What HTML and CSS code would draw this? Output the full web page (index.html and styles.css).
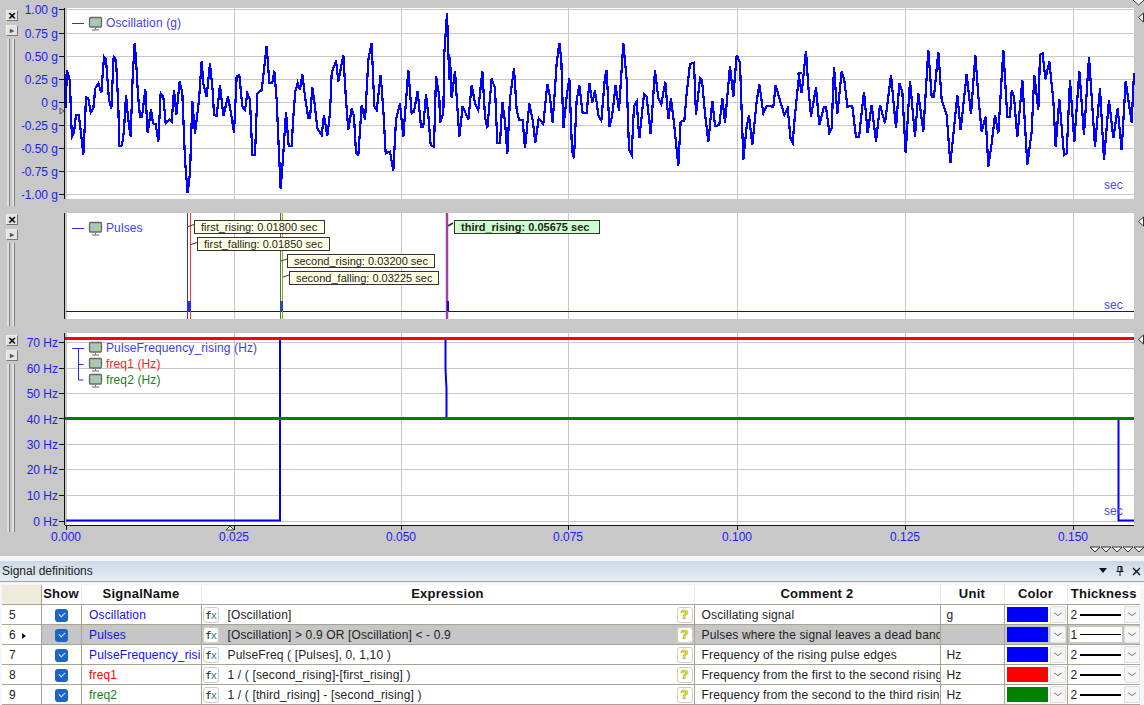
FILE: index.html
```html
<!DOCTYPE html>
<html lang="en">

<head>
    <meta charset="UTF-8">
    <title>Signal definitions</title>
    <link rel="stylesheet" href="styles.css">
</head>

<body>
    <svg width="0" height="0" class="defs">
        <defs>
            <g id="monitor">
                <rect x="1.5" y="0.5" width="12" height="9.5" rx="1" fill="#a8c8b4" stroke="#666" stroke-width="1.3" />
                <path d="M7.5 11v1.5M4 13h7" stroke="#666" fill="none" />
            </g>
        </defs>
    </svg>

    <div class="charts">
        <!-- Oscillation -->
        <div class="chart chart-top">
            <div class="tools">
                <button class="tool tool-close">×</button>
                <button class="tool tool-arrow">▸</button>
                <div class="slider"></div>
            </div>
            <svg class="plot" viewBox="22 0 1122 206" width="1122" height="206">
                <rect x="66" y="8" width="1068" height="191" fill="#fff" />
                <path class="grid" d="M66 9.5h1068M66 33.5h1068M66 56.5h1068M66 79.5h1068M66 102.5h1068M66 125.5h1068M66 148.5h1068M66 171.5h1068M66 194.5h1068M66.5 8v191M234.5 8v191M401.5 8v191M568.5 8v191M737.5 8v191M905.5 8v191M1073.5 8v191" />
                <path class="axis" d="M64.5 8v191M59 9.5h5M59 33.5h5M59 56.5h5M59 79.5h5M59 102.5h5M59 125.5h5M59 148.5h5M59 171.5h5M59 194.5h5" />
                <path d="M60 108l4 3-4 3z" fill="none" stroke="#555" />
                <g class="ticks">
                    <text x="58" y="14">1.00 g</text>
                    <text x="58" y="38">0.75 g</text>
                    <text x="58" y="61">0.50 g</text>
                    <text x="58" y="84">0.25 g</text>
                    <text x="58" y="107">0 g</text>
                    <text x="58" y="130">-0.25 g</text>
                    <text x="58" y="153">-0.50 g</text>
                    <text x="58" y="176">-0.75 g</text>
                    <text x="58" y="199">-1.00 g</text>
                </g>
                <g class="trace">
                    <polyline transform="translate(60 0) scale(.33333)" points="18,325 20,212 27,230 30,245 33,350 36,410 42,398 48,345 56,345 62,390 70,465 75,365 78,292 85,295 92,338 100,325 106,265 115,250 124,278 132,170 138,178 147,300 154,326 161,170 168,180 175,320 178,438 186,436 192,390 198,285 203,340 208,385 212,410 218,232 224,128 228,178 234,285 240,350 246,350 256,268 263,400 273,328 279,370 287,372 295,425 302,280 310,290 317,370 328,358 335,365 342,270 349,345 359,245 367,280 375,480 383,580 390,520 397,302 405,402 417,300 425,183 430,250 440,290 450,190 458,270 462,345 470,348 480,255 490,348 504,290 513,340 522,398 530,230 538,225 547,320 555,330 562,280 570,300 577,465 585,465 592,280 605,270 612,210 620,138 628,248 637,248 643,212 650,300 657,460 662,568 670,460 678,335 686,438 695,438 700,350 706,275 713,248 720,270 727,222 735,290 745,355 750,355 757,262 765,320 772,385 785,405 792,345 802,408 810,340 815,220 828,182 835,245 850,165 858,300 865,390 875,325 882,350 888,460 895,465 905,315 915,360 925,180 935,128 943,320 950,330 962,225 970,330 977,460 990,455 1000,512 1008,360 1020,310 1030,410 1045,210 1055,340 1062,335 1073,272 1083,380 1090,380 1098,282 1105,345 1112,435 1122,440 1128,228 1138,290 1140,368 1150,340 1153,160 1161,40 1168,240 1170,172" />
                    <polyline transform="translate(450 0) scale(.33333)" points="0,172 5,295 15,212 22,320 28,410 38,318 55,360 65,255 75,310 85,330 97,212 105,350 112,385 125,236 135,265 142,430 150,430 157,305 165,365 172,462 180,295 192,205 200,330 207,360 218,360 225,445 238,310 248,360 256,428 266,355 280,372 292,252 300,290 308,368 320,190 328,128 334,180 340,385 350,290 358,233 366,450 372,475 380,300 388,255 398,340 410,340 418,248 427,308 435,272 445,345 454,362 465,230 470,210 478,380 486,350 497,255 507,332 520,130 530,240 537,450 545,465 552,318 560,305 568,415 582,282 590,290 602,402 615,210 625,295 634,312 646,245 655,358 663,295 672,370 685,498 692,365 703,362 710,280 720,192 732,188 738,345 750,235 756,240 765,340 775,425 787,302 795,378 808,375 817,295 825,368 840,198 850,290 860,165 870,188 880,480 890,380 897,345 907,435 920,305 928,252 940,340 950,318 970,320 977,255 990,302 1003,345 1013,325 1022,418 1028,428 1035,345 1048,218 1055,218" />
                    <polyline transform="translate(790 0) scale(.33333)" points="25,218 35,280 48,152 55,260 63,350 78,262 88,375 102,320 108,320 118,398 125,385 132,200 142,342 155,215 163,240 172,320 187,318 198,412 207,412 222,275 233,400 245,315 258,425 270,315 285,370 303,225 318,385 328,250 337,275 347,460 360,242 375,410 385,280 400,395 415,150 425,290 432,290 445,155 455,300 470,345 481,490 490,405 502,285 512,390 530,222 543,342 556,165 566,300 575,395 587,350 595,500 605,430 615,345 625,400 640,150 652,352 660,352 665,272 672,290 682,412 697,240 712,495 725,395 733,225 745,330 750,165 758,160 766,238 778,185 790,300 797,440 808,297 822,465 830,460 840,240 853,425 868,212 882,405 897,170 915,440 930,265 942,480 957,300 970,415 983,325 995,450 1007,243 1025,368 1032,218" />
                </g>
                <path d="M72 23.5h12" stroke="#2a2af0" />
                <use href="#monitor" x="88" y="17" />
                <text class="legend blue" x="106" y="27">Oscillation (g)</text>
                <text class="unit" x="1104" y="189">sec</text>
                <path d="M1133 0l5.500 5 5.500-5" fill="#fff" stroke="#333" />
                <path d="M1143.500 13l-5 4.500 5 4.500z" fill="#fff" stroke="#333" />
            </svg>
        </div>

        <!-- Pulses -->
        <div class="chart chart-mid">
            <div class="tools">
                <button class="tool tool-close">×</button>
                <button class="tool tool-arrow">▸</button>
                <div class="slider"></div>
            </div>
            <svg class="plot" viewBox="22 206 1122 120" width="1122" height="120">
                <rect x="66" y="213" width="1068" height="106" fill="#fff" />
                <path class="grid" d="M66.5 213v106M234.5 213v106M401.5 213v106M568.5 213v106M737.5 213v106M905.5 213v106M1073.5 213v106" />
                <path class="axis" d="M64.5 213v106" />
                <path d="M66 311.5h1068" stroke="#0000ff" fill="none" />
                <path d="M187.5 213v106" stroke="#2a2af0" fill="none" />
                <path d="M190.5 213v106" stroke="#ff3030" fill="none" />
                <rect x="188" y="301" width="3" height="10" fill="#2a2af0" />
                <path d="M280.5 213v106" stroke="#2e8b2e" fill="none" />
                <path d="M282.5 213v106" stroke="#a0a030" fill="none" />
                <rect x="280" y="301" width="3" height="10" fill="#2050a0" />
                <path d="M447 213v106" stroke="#a040a0" stroke-width="2.500" fill="none" />
                <rect x="447" y="301" width="2" height="10" fill="#0000ff" />
                <path d="M72 228.5h12" stroke="#2a2af0" />
                <use href="#monitor" x="88" y="222" />
                <text class="legend blue" x="106" y="232">Pulses</text>

                <path class="lead" d="M188 226.5l6-2M191 244.5l6-2M281 261l6-2M283 277l6-2" />
                <path class="lead lead-bold" d="M448 226l5-3" />
                <rect class="flag" x="194.5" y="220.5" width="130" height="13" />
                <text class="flag-text" x="201" y="231">first_rising: 0.01800 sec</text>
                <rect class="flag" x="197.5" y="237.5" width="132" height="13" />
                <text class="flag-text" x="204" y="248">first_falling: 0.01850 sec</text>
                <rect class="flag" x="287.5" y="254.5" width="147" height="13" />
                <text class="flag-text" x="294" y="265">second_rising: 0.03200 sec</text>
                <rect class="flag" x="289.5" y="271.5" width="149" height="13" />
                <text class="flag-text" x="296" y="282">second_falling: 0.03225 sec</text>
                <rect class="flag flag-active" x="454.5" y="220.5" width="145" height="13" />
                <text class="flag-text flag-text-active" x="461" y="231">third_rising: 0.05675 sec</text>

                <text class="unit" x="1104" y="309">sec</text>
                <path d="M1143.500 217l-5 4.500 5 4.500z" fill="#fff" stroke="#333" />
            </svg>
        </div>

        <!-- Frequency -->
        <div class="chart chart-low">
            <div class="tools">
                <button class="tool tool-close">×</button>
                <button class="tool tool-arrow">▸</button>
                <div class="slider"></div>
            </div>
            <svg class="plot" viewBox="22 326 1122 230" width="1122" height="230">
                <rect x="66" y="333" width="1068" height="192" fill="#fff" />
                <path class="grid" d="M66 342.5h1068M66 368.5h1068M66 393.5h1068M66 444.5h1068M66 469.5h1068M66 495.5h1068M66 521.5h1068M66.5 333v192M234.5 333v192M401.5 333v192M568.5 333v192M737.5 333v192M905.5 333v192M1073.5 333v192" />
                <path class="axis" d="M64.5 333v192M59 342.5h5M59 368.5h5M59 393.5h5M59 418.5h5M59 444.5h5M59 469.5h5M59 495.5h5M59 521.5h5M65 525.5h1069M66.5 526v4M234.5 526v4M401.5 526v4M568.5 526v4M737.5 526v4M905.5 526v4M1073.5 526v4" />
                <g class="ticks">
                    <text x="58" y="347">70 Hz</text>
                    <text x="58" y="373">60 Hz</text>
                    <text x="58" y="398">50 Hz</text>
                    <text x="58" y="424">40 Hz</text>
                    <text x="58" y="449">30 Hz</text>
                    <text x="58" y="474">20 Hz</text>
                    <text x="58" y="500">10 Hz</text>
                    <text x="58" y="526">0 Hz</text>
                </g>
                <path d="M66 520.5h214V339" class="freq-line" />
                <path d="M445.5 339v30l1 20v29" class="freq-line" />
                <path d="M1118.5 418.5V520.5H1134" class="freq-line" />
                <path d="M65 338.5h1069" stroke="#ff0000" stroke-width="3" fill="none" />
                <path d="M65 418.5h1069" stroke="#008000" stroke-width="3" fill="none" />
                <path d="M72 348.5h12M78.5 349v31h5M78.5 364.5h5" stroke="#2a2af0" fill="none" />
                <use href="#monitor" x="88" y="342" />
                <use href="#monitor" x="88" y="358" />
                <use href="#monitor" x="88" y="374" />
                <text class="legend blue" x="106" y="352">PulseFrequency_rising (Hz)</text>
                <text class="legend red" x="106" y="368">freq1 (Hz)</text>
                <text class="legend green" x="106" y="384">freq2 (Hz)</text>
                <text class="unit" x="1104" y="515">sec</text>
                <path d="M1143.500 335l-5 4.500 5 4.500z" fill="#fff" stroke="#333" />
                <g class="ticks ticks-x">
                    <text x="66" y="541">0.000</text>
                    <text x="234" y="541">0.025</text>
                    <text x="401" y="541">0.050</text>
                    <text x="568" y="541">0.075</text>
                    <text x="737" y="541">0.100</text>
                    <text x="905" y="541">0.125</text>
                    <text x="1073" y="541">0.150</text>
                </g>
                <path d="M226 530l4-4 4 4z" fill="#fff" stroke="#444" />
                <path d="M1090 547l5 5 5-5zM1101 547l5 5 5-5zM1112 547l5 5 5-5zM1123 547l5 5 5-5zM1134 547l5 5 5-5z" fill="#fff" stroke="#333" />
            </svg>
        </div>
    </div>

    <div class="panel">
        <div class="panel-title">
            <span>Signal definitions</span>
            <div class="panel-icons">
                <svg width="10" height="6" viewBox="0 0 10 6"><path d="M1 0h8l-4 5z" fill="#111" /></svg>
                <svg width="8" height="10" viewBox="0 0 8 10"><path d="M2 .5h4v5h-4zM.5 5.5h7M4 6v4M5 1v4" stroke="#111" fill="none" /></svg>
                <svg width="9" height="9" viewBox="0 0 9 9"><path d="M1 1l7 7M8 1l-7 7" stroke="#111" stroke-width="1.400" fill="none" /></svg>
            </div>
        </div>
        <table class="signals">
            <colgroup>
                <col class="c-num"><col class="c-show"><col class="c-name"><col class="c-expr"><col class="c-comment"><col class="c-unit"><col class="c-color"><col class="c-thick">
            </colgroup>
            <thead>
                <tr>
                    <th class="corner"></th>
                    <th>Show</th>
                    <th>SignalName</th>
                    <th>Expression</th>
                    <th>Comment 2</th>
                    <th>Unit</th>
                    <th>Color</th>
                    <th>Thickness</th>
                </tr>
            </thead>
            <tbody>
                <tr>
                    <td class="num">5</td>
                    <td><span class="check"></span></td>
                    <td class="blue"><div class="clip name">Oscillation</div></td>
                    <td><div class="expr"><span class="fx">f<i>x</i></span><span class="expr-text">[Oscillation]</span><span class="hint">?</span></div></td>
                    <td><div class="clip">Oscillating signal</div></td>
                    <td class="unit-cell">g</td>
                    <td><div class="pick"><span class="swatch sw-blue"></span><span class="drop"></span></div></td>
                    <td><div class="pick"><span class="thick">2<b class="line"></b></span><span class="drop"></span></div></td>
                </tr>
                <tr class="selected">
                    <td class="num">6 <span class="marker"></span></td>
                    <td><span class="check"></span></td>
                    <td class="blue"><div class="clip name">Pulses</div></td>
                    <td><div class="expr"><span class="fx">f<i>x</i></span><span class="expr-text">[Oscillation] &gt; 0.9 OR [Oscillation] &lt; - 0.9</span><span class="hint">?</span></div></td>
                    <td><div class="clip">Pulses where the signal leaves a dead band</div></td>
                    <td class="unit-cell"></td>
                    <td><div class="pick"><span class="swatch sw-blue"></span><span class="drop"></span></div></td>
                    <td><div class="pick"><span class="thick thick-on">1<b class="line line-thin"></b></span><span class="drop"></span></div></td>
                </tr>
                <tr>
                    <td class="num">7</td>
                    <td><span class="check"></span></td>
                    <td class="blue"><div class="clip name">PulseFrequency_rising</div></td>
                    <td><div class="expr"><span class="fx">f<i>x</i></span><span class="expr-text">PulseFreq ( [Pulses], 0, 1,10 )</span><span class="hint">?</span></div></td>
                    <td><div class="clip">Frequency of the rising pulse edges</div></td>
                    <td class="unit-cell">Hz</td>
                    <td><div class="pick"><span class="swatch sw-blue"></span><span class="drop"></span></div></td>
                    <td><div class="pick"><span class="thick">2<b class="line"></b></span><span class="drop"></span></div></td>
                </tr>
                <tr>
                    <td class="num">8</td>
                    <td><span class="check"></span></td>
                    <td class="red"><div class="clip name">freq1</div></td>
                    <td><div class="expr"><span class="fx">f<i>x</i></span><span class="expr-text">1 / ( [second_rising]-[first_rising] )</span><span class="hint">?</span></div></td>
                    <td><div class="clip">Frequency from the first to the second rising edge</div></td>
                    <td class="unit-cell">Hz</td>
                    <td><div class="pick"><span class="swatch sw-red"></span><span class="drop"></span></div></td>
                    <td><div class="pick"><span class="thick">2<b class="line"></b></span><span class="drop"></span></div></td>
                </tr>
                <tr>
                    <td class="num">9</td>
                    <td><span class="check"></span></td>
                    <td class="green"><div class="clip name">freq2</div></td>
                    <td><div class="expr"><span class="fx">f<i>x</i></span><span class="expr-text">1 / ( [third_rising] - [second_rising] )</span><span class="hint">?</span></div></td>
                    <td><div class="clip">Frequency from the second to the third rising edge</div></td>
                    <td class="unit-cell">Hz</td>
                    <td><div class="pick"><span class="swatch sw-green"></span><span class="drop"></span></div></td>
                    <td><div class="pick"><span class="thick">2<b class="line"></b></span><span class="drop"></span></div></td>
                </tr>
            </tbody>
        </table>
    </div>
</body>

</html>
```

FILE: styles.css
```css
html,
body {
    margin: 0;
    padding: 0;
    height: 100%;
    overflow: hidden;
    background: #fff;
    font-family: "Liberation Sans", Arial, sans-serif;
    font-size: 12px;
}

.defs {
    position: absolute;
}

/* charts */
.charts {
    background: #c8c8c8;
    height: 556px;
}

.chart {
    display: flex;
}

.chart-top { height: 206px; }
.chart-mid { height: 120px; }
.chart-low { height: 230px; }

.plot {
    display: block;
    flex: none;
}

.tools {
    width: 22px;
    flex: none;
    display: flex;
    flex-direction: column;
    align-items: flex-start;
    gap: 4px;
    padding: 10px 0 0 6px;
    box-sizing: border-box;
}

.chart-mid .tools { padding-top: 8px; }
.chart-low .tools { padding-top: 9px; }
.chart-low .slider { margin-bottom: 24px; }

.tool {
    width: 12px;
    height: 11px;
    padding: 0;
    border: 1px solid;
    border-color: #eee #777 #777 #eee;
    background: #e4e4e4;
    color: #000;
    font: bold 13px/8px "Liberation Sans", Arial, sans-serif;
    text-align: center;
}

.tool-arrow {
    color: #555;
    font-size: 8px;
}

/* the two thin rails under the buttons */
.slider {
    flex: 1;
    width: 9px;
    margin: -1px 0 0 1px;
    background: linear-gradient(to right,
            #e0e0e0 0, #e0e0e0 2px, #808080 2px, #808080 3px,
            transparent 3px, transparent 5px,
            #e0e0e0 5px, #e0e0e0 7px, #808080 7px, #808080 8px,
            transparent 8px);
}

.grid {
    stroke: #c8c8c8;
    fill: none;
}

.axis {
    stroke: #111;
    fill: none;
}

.ticks text {
    fill: #2020ee;
    font-size: 12px;
    text-anchor: end;
}

.ticks-x text {
    text-anchor: middle;
}

.trace polyline {
    fill: none;
    stroke: #0000ff;
    stroke-width: 2.2px;
    vector-effect: non-scaling-stroke;
    shape-rendering: crispEdges;
}

.freq-line {
    fill: none;
    stroke: #0000ff;
    stroke-width: 2;
}

.legend {
    font-size: 12px;
    letter-spacing: .12px;
}

.legend.blue { fill: #4040f0; }
.legend.red { fill: #ff2020; }
.legend.green { fill: #208020; }

.unit {
    fill: #4a4af0;
    font-size: 12px;
}

.lead {
    stroke: #333;
    fill: none;
}

.lead-bold {
    stroke-width: 2;
}

.flag {
    fill: #ffffe4;
    stroke: #333;
}

.flag-active {
    fill: #ccffcc;
}

.flag-text {
    fill: #222;
    font-size: 11px;
}

.flag-text-active {
    font-weight: bold;
    font-size: 11px;
}

/* signal table */
.panel {
    height: 149px;
    padding-top: 5px;
    box-sizing: border-box;
    background: #f4f6fa;
}

.panel-title {
    display: flex;
    justify-content: space-between;
    align-items: center;
    height: 20px;
    padding: 0 3px 0 2px;
    background: linear-gradient(#cbd8e6, #e6edf5);
    border-bottom: 1px solid #a0a0a0;
    color: #222;
    font-size: 12px;
}

.panel-icons {
    display: flex;
    align-items: center;
    gap: 8px;
}

.signals {
    margin: 3px 0 0 2px;
    width: 1138px;
    table-layout: fixed;
    border-collapse: collapse;
    background: #fff;
}

.c-num { width: 39px; }
.c-show { width: 40px; }
.c-name { width: 120px; }
.c-expr { width: 493px; }
.c-comment { width: 246px; }
.c-unit { width: 64px; }
.c-color { width: 63px; }
.c-thick { width: 73px; }

.signals th {
    height: 16px;
    padding: 0 0 3px;
    font-size: 13px;
    letter-spacing: .25px;
    color: #111;
    border-right: 1px solid #e8e8e8;
    border-bottom: 1px solid #a8a494;
    background: #fff;
}

.signals th.corner {
    background: #eeeadc;
    border-right-color: #a8a494;
}

.signals td {
    height: 19px;
    padding: 0;
    font-size: 12px;
    letter-spacing: .15px;
    color: #222;
    border-right: 1px solid #a8a494;
    border-bottom: 1px solid #a8a494;
    text-align: left;
    overflow: hidden;
}

.signals td:last-child,
.signals th:last-child {
    border-right: none;
}

.signals td.blue { color: #1010f0; }
.signals td.red { color: #ff0000; }
.signals td.green { color: #108010; }

.signals td:nth-child(2) { text-align: center; }

.signals .selected td { background: #c6c6c6; }
.signals .selected td.num { background: #fff; }

.signals td.num {
    padding-left: 7px;
    white-space: nowrap;
}

.marker {
    display: inline-block;
    margin-left: 3px;
    border-left: 4px solid #111;
    border-top: 3px solid transparent;
    border-bottom: 3px solid transparent;
}

.check {
    display: inline-block;
    width: 13px;
    height: 13px;
    margin-top: 2px;
    border-radius: 3px;
    background: #1a66c0;
    position: relative;
    vertical-align: top;
}

.check::after {
    content: "";
    position: absolute;
    left: 4px;
    top: 3px;
    width: 5px;
    height: 3px;
    border-left: 1px solid #cfe2f6;
    border-bottom: 1px solid #cfe2f6;
    transform: rotate(-45deg);
}

.clip {
    padding-left: 7px;
    white-space: nowrap;
    overflow: hidden;
}

.clip.name {
    padding-left: 7.5px;
}

.signals td.unit-cell {
    padding-left: 6px;
}

.expr {
    display: flex;
    align-items: center;
    height: 19px;
}

.fx {
    width: 16px;
    height: 16px;
    margin-left: 1px;
    flex: none;
    border: 1px solid #ccc;
    border-radius: 3px;
    background: #fff;
    color: #111;
    font: 11px/15px "DejaVu Sans Mono", monospace;
    letter-spacing: -1px;
    text-align: center;
    box-sizing: border-box;
}

.fx i {
    font-style: normal;
    color: #2a7a70;
}

.expr-text {
    margin-left: 9px;
    flex: 1;
    white-space: nowrap;
}

.hint {
    width: 16px;
    height: 16px;
    margin-right: 1px;
    flex: none;
    border: 1px solid #ccc;
    border-radius: 3px;
    background: #fff;
    color: #e8e800;
    font: bold 13px/14px "Liberation Sans", Arial, sans-serif;
    text-align: center;
    box-sizing: border-box;
    text-shadow: 0 0 1px #222;
}

.pick {
    display: flex;
    align-items: center;
    height: 19px;
    padding-left: 2px;
}

.swatch {
    width: 41px;
    height: 15px;
    flex: none;
}

.sw-blue { background: #0000ff; }
.sw-red { background: #ff0000; }
.sw-green { background: #008000; }

.drop {
    width: 16px;
    height: 17px;
    margin-left: 2px;
    flex: none;
    border: 1px solid #ddd;
    border-radius: 2px;
    background: #f6f6f6;
    box-sizing: border-box;
    position: relative;
}

.drop::after {
    content: "";
    position: absolute;
    left: 4px;
    top: 3px;
    width: 5px;
    height: 5px;
    border-right: 1px solid #777;
    border-bottom: 1px solid #777;
    transform: scale(1, .7) rotate(45deg);
}

.thick {
    display: flex;
    align-items: center;
    width: 52px;
    height: 15px;
    padding-left: 1px;
    box-sizing: border-box;
    flex: none;
    gap: 3px;
    font-size: 12px;
}

.thick-on {
    background: #fff;
}

.line {
    display: block;
    width: 41px;
    height: 2px;
    background: #000;
}

.line-thin {
    height: 1px;
}
```
